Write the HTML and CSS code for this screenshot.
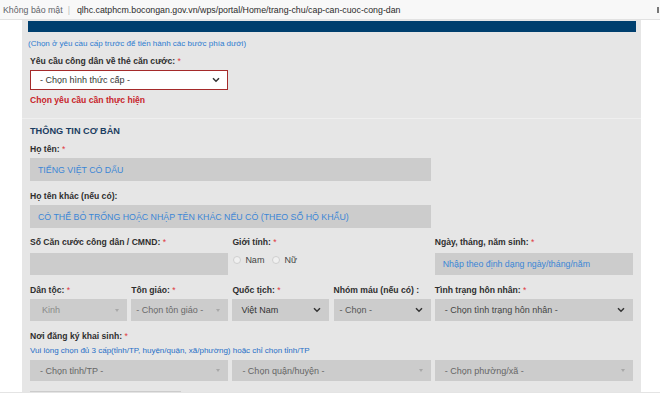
FILE: index.html
```html
<!DOCTYPE html>
<html lang="vi">
<head>
<meta charset="utf-8">
<title>Cấp căn cước công dân</title>
<link rel="stylesheet" href="styles.css">
</head>
<body>
<div class="topbar">
  <span class="insecure">Không bảo mật</span><span class="sep">|</span><span class="url">qlhc.catphcm.bocongan.gov.vn/wps/portal/Home/trang-chu/cap-can-cuoc-cong-dan</span>
  <span class="menu"></span>
</div>
<div class="panel">
  <div class="bluebar"></div>
  <div class="instruction">(Chọn ở yêu cầu cấp trước để tiến hành các bước phía dưới)</div>
  <div class="form">
    <div class="label l-first">Yêu cầu công dân về thẻ căn cước: <span class="req">*</span></div>
    <div class="select-main">
      <span>- Chọn hình thức cấp -</span>
      <svg class="chev" width="8" height="6" viewBox="0 0 8 6"><path d="M1 1.2 4 4.2 7 1.2" fill="none" stroke="#333" stroke-width="1.5"/></svg>
    </div>
    <div class="error">Chọn yêu cầu cần thực hiện</div>
  </div>
  <div class="divider"></div>
  <div class="form">
    <div class="title">THÔNG TIN CƠ BẢN</div>
    <div class="label l-name">Họ tên: <span class="req">*</span></div>
    <div class="input wide"><span class="ph">TIẾNG VIỆT CÓ DẤU</span></div>
    <div class="label l-other">Họ tên khác (nếu có):</div>
    <div class="input wide"><span class="ph">CÓ THỂ BỎ TRỐNG HOẶC NHẬP TÊN KHÁC NẾU CÓ (THEO SỔ HỘ KHẨU)</span></div>

    <div class="grid row3">
      <div class="cell span2">
        <div class="label">Số Căn cước công dân / CMND: <span class="req">*</span></div>
        <div class="input short"></div>
      </div>
      <div class="cell span2">
        <div class="label">Giới tính: <span class="req">*</span></div>
        <div class="radios">
          <span class="radio"></span><span class="rlabel">Nam</span>
          <span class="radio"></span><span class="rlabel">Nữ</span>
        </div>
      </div>
      <div class="cell span2">
        <div class="label">Ngày, tháng, năm sinh: <span class="req">*</span></div>
        <div class="input short"><span class="ph">Nhập theo định dạng ngày/tháng/năm</span></div>
      </div>
    </div>

    <div class="grid row4">
      <div class="cell">
        <div class="label">Dân tộc: <span class="req">*</span></div>
        <div class="sel s2"><span class="t-kinh">Kinh</span><span class="tri"></span></div>
      </div>
      <div class="cell">
        <div class="label">Tôn giáo: <span class="req">*</span></div>
        <div class="sel s2"><span class="t-ton">- Chọn tôn giáo -</span><span class="tri"></span></div>
      </div>
      <div class="cell">
        <div class="label">Quốc tịch: <span class="req">*</span></div>
        <div class="sel native"><span class="t-vn">Việt Nam</span>
          <svg class="chev" width="8" height="6" viewBox="0 0 8 6"><path d="M1 1.2 4 4.2 7 1.2" fill="none" stroke="#333" stroke-width="1.5"/></svg>
        </div>
      </div>
      <div class="cell">
        <div class="label">Nhóm máu (nếu có) :</div>
        <div class="sel native"><span class="t-mau">- Chọn -</span>
          <svg class="chev" width="8" height="6" viewBox="0 0 8 6"><path d="M1 1.2 4 4.2 7 1.2" fill="none" stroke="#333" stroke-width="1.5"/></svg>
        </div>
      </div>
      <div class="cell span2">
        <div class="label">Tình trạng hôn nhân: <span class="req">*</span></div>
        <div class="sel native"><span class="t-hn">- Chọn tình trạng hôn nhân -</span>
          <svg class="chev" width="8" height="6" viewBox="0 0 8 6"><path d="M1 1.2 4 4.2 7 1.2" fill="none" stroke="#333" stroke-width="1.5"/></svg>
        </div>
      </div>
    </div>

    <div class="label l-birth">Nơi đăng ký khai sinh: <span class="req">*</span></div>
    <div class="hint">Vui lòng chọn đủ 3 cấp(tỉnh/TP, huyện/quận, xã/phường) hoặc chỉ chọn tỉnh/TP</div>
    <div class="grid row5">
      <div class="sel s2 span2 low"><span class="t-loc">- Chọn tỉnh/TP -</span><span class="tri"></span></div>
      <div class="sel s2 span2 low"><span class="t-loc">- Chọn quận/huyện -</span><span class="tri"></span></div>
      <div class="sel s2 span2 low"><span class="t-loc">- Chọn phường/xã -</span><span class="tri"></span></div>
    </div>
    <div class="nextbar"></div>
  </div>
</div>
<div class="bottomline"></div>
</body>
</html>
```
FILE: styles.css
```css
html, body {
  margin: 0;
  padding: 0;
}
body {
  width: 660px;
  height: 398px;
  overflow: hidden;
  background: #ffffff;
  font-family: "Liberation Sans", Arial, sans-serif;
  color: #333333;
}

.topbar {
  height: 20px;
  box-sizing: border-box;
  border-bottom: 1px solid #e2e2e2;
  background: #f8f8f8;
  display: flex;
  align-items: center;
  padding-left: 3px;
  font-size: 8.8px;
  position: relative;
}
.insecure { color: #5f6368; }
.sep { color: #bdbdbd; margin: 0 7px 0 5px; }
.url { color: #2b2b2b; }
.menu {
  margin-left: auto;
  width: 2px;
  height: 6px;
  background: #777;
  margin-right: 1px;
}

.panel {
  margin-left: 22px;
  width: 619px;
  height: 372px;
  box-sizing: border-box;
  background: #e6e6e6;
  padding: 1px 5px 0 6px;
  overflow: hidden;
}
.bluebar {
  height: 11px;
  background: #003f6e;
}
.instruction {
  margin-top: 6px;
  line-height: 12px;
  font-size: 8px;
  color: #2c7bd0;
}
.form {
  padding-left: 2px;
}
.label {
  font-size: 8.6px;
  font-weight: bold;
  line-height: 12px;
  color: #2e2e2e;
  white-space: nowrap;
}
.req { color: #e0393e; font-weight: normal; }
.l-first { margin-top: 5px; }

.select-main {
  margin-top: 3px;
  width: 198px;
  height: 20px;
  box-sizing: border-box;
  border: 1px solid #a52a2a;
  background: #ffffff;
  display: flex;
  align-items: center;
  padding: 0 7px 0 9px;
  font-size: 9px;
  color: #333;
}
.chev { margin-left: auto; }

.error {
  margin-top: 4px;
  line-height: 12px;
  font-size: 8.6px;
  font-weight: bold;
  color: #c8242b;
}
.divider {
  margin: 12px -5px 0 -6px;
  height: 1px;
  background: #efefef;
}
.title {
  margin-top: 6px;
  line-height: 12px;
  font-size: 9.2px;
  font-weight: bold;
  color: #1b3d61;
}
.l-name { margin-top: 6px; }
.l-other { margin-top: 9px; }

.input {
  margin-top: 3px;
  height: 23px;
  background: #cccccc;
  display: flex;
  align-items: center;
  padding-left: 8px;
  box-sizing: border-box;
  font-size: 8.8px;
}
.input.wide { width: 401px; }
.input.short { margin-top: 5px; height: 22px; }
.ph { color: #3b86d6; white-space: nowrap; }

.grid {
  display: grid;
  grid-template-columns: repeat(6, 97px);
  column-gap: 4.2px;
}
.span2 { grid-column: span 2; }
.row3 { margin-top: 8px; }
.row4 { margin-top: 9px; }
.row4 .sel { margin-top: 3px; }
.row5 { margin-top: 3px; }

.radios {
  margin-top: 6px;
  display: flex;
  align-items: center;
  height: 12px;
  font-size: 9px;
  color: #444;
}
.radio {
  width: 8px;
  height: 8px;
  box-sizing: border-box;
  border-radius: 50%;
  border: 1px solid #cfcfcf;
  background: #f0f0f0;
  margin-left: 1px;
}
.rlabel { margin: 0 7px 0 4px; }

.sel {
  height: 22px;
  box-sizing: border-box;
  background: #cccccc;
  display: flex;
  align-items: center;
  font-size: 9px;
  white-space: nowrap;
  padding-right: 8px;
}
.sel.low { height: 21px; }
.tri {
  margin-left: auto;
  width: 0;
  height: 0;
  border-left: 2.5px solid transparent;
  border-right: 2.5px solid transparent;
  border-top: 3px solid #a8a8a8;
}
.t-kinh { padding-left: 12px; color: #8a8a8a; }
.t-ton { padding-left: 5px; color: #6a6a6a; }
.t-vn { padding-left: 9px; color: #333; }
.t-mau { padding-left: 6px; color: #555; }
.t-hn { padding-left: 10px; color: #444; }
.t-loc { padding-left: 10px; color: #666; }

.l-birth { margin-top: 9px; }
.hint {
  margin-top: 3px;
  line-height: 12px;
  font-size: 8px;
  color: #1f6fc7;
}
.nextbar {
  margin-top: 10px;
  width: 151px;
  height: 6px;
  background: #cccccc;
}
.bottomline {
  height: 1px;
  background: #e4e4e4;
}
```
